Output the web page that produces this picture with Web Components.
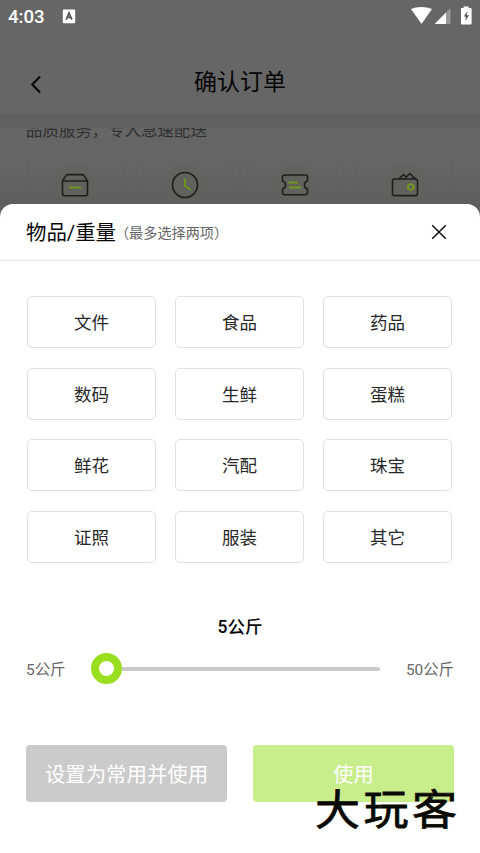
<!DOCTYPE html>
<html lang="zh-CN"><head><meta charset="utf-8"><title>确认订单</title>
<style>
html,body{margin:0;padding:0;background:#666}
body{font-family:Roboto,"Noto Sans CJK SC",sans-serif;width:480px;height:853px;overflow:hidden}
</style></head><body>
<order-page></order-page>
<script>
const define = (name, html) => customElements.define(name, class extends HTMLElement {
  constructor() {
    super();
    const t = document.createElement('template');
    t.innerHTML = html;
    this.attachShadow({mode: 'open'}).append(t.content.cloneNode(true));
  }
});

define('status-bar', `<style>
:host{display:flex;height:34px;align-items:center;padding:0 8px 0 8px;box-sizing:border-box;color:#fff}
.time{font-size:18.6px;font-weight:500;line-height:34px;width:54px;white-space:nowrap}
.sp{flex:1}svg{display:block}
</style>
<span class="time">4:03</span>
<svg width="14" height="16" viewBox="0 0 14 16"><rect x=".8" y=".6" width="12.4" height="13.6" rx="1" fill="#fff"/><path d="M4.1 10.6 7 3.8l2.9 6.8M5.2 8.400h3.600" fill="none" stroke="#555" stroke-width="1.700"/></svg>
<span class="sp"></span>
<svg width="61" height="22" viewBox="411 6 61 22"><path d="M411 9C416.800 6.200 426 6.200 432 9L421.500 24z" fill="#fff"/><path d="M435 24V23.500L446 12.500V24z" fill="#fff"/><path d="M446 12.500l4.500-4.500V24H446z" fill="#999"/><path d="M463.600 8v-1.500h5V8h2.200q.8 0 .8.8v15q0 .8-.8.8h-9q-.8 0-.8-.8v-15q0-.8.8-.8z" fill="#fff"/><path d="M467.700 11l-4 5.600h2.300l-.8 4.400 3.900-5.700h-2.400z" fill="#555"/></svg>`);

define('nav-header', `<style>
:host{display:grid;grid-template-columns:72px 1fr 72px;height:79px;align-items:center;color:#050505}
svg{display:block;margin:21px 0 0 28px}
.t{text-align:center;font-size:23px;line-height:34px;padding-top:18px}
</style><svg width="16" height="20" viewBox="0 0 16 20"><path d="M12 2.500 4.300 10.500 12 18.500" fill="none" stroke="#080808" stroke-width="2.100"/></svg><span class="t"><slot></slot></span>`);

const art = {
  box: '<path d="M9.500 18 13 12.600Q13.600 11.600 15 11.600H29Q30.400 11.600 31 12.600L34.500 18V30.500Q34.500 32.700 32.300 32.700H11.700Q9.500 32.700 9.500 30.500zH34.500"/><path class="g" d="M16 24.500H28"/>',
  clock: '<circle cx="22" cy="22" r="12.500"/><path class="g" d="M22 15.500V23L28 27"/>',
  ticket: '<path d="M11.500 12H32.500Q34.500 12 34.500 14V18Q31.500 18.500 31.500 22T34.500 26V29.500Q34.500 31.700 32.500 31.700H11.500Q9.500 31.700 9.500 29.500V26Q12.500 25.500 12.500 22T9.500 18V14Q9.500 12 11.500 12z"/><path class="g" d="M15.500 19.500H25M16 24.500H28"/>',
  wallet: '<rect x="9.500" y="16" width="25" height="16.600" rx="2"/><path d="M16 16 20.500 11.500 23.500 14.500M21.500 16 26.700 10.500 32.500 16"/><circle class="g" cx="27.800" cy="24" r="2.900"/>'
};
customElements.define('service-icon', class extends HTMLElement {
  constructor() {
    super();
    this.attachShadow({mode: 'open'}).innerHTML = `<style>
:host{display:flex;justify-content:center;height:60px;box-sizing:border-box;border:1px solid #606060;border-top-color:transparent;border-radius:6px;padding-top:3px}
svg{display:block;fill:none;stroke:#1e1e1e;stroke-width:1.600;stroke-linejoin:round}.g{stroke:#6f9a1c;stroke-width:1.800}
</style><svg width="44" height="44" viewBox="0 0 44 44"><circle cx="22" cy="22" r="21" fill="#60635a" fill-opacity=".6" stroke="none"/>${art[this.getAttribute('kind')]}</svg>`;
  }
});

define('page-backdrop', `<style>
:host{display:block;height:204px;overflow:hidden;background:#666}
.band{height:15px;background:#606060}
.clip{height:76px;overflow:hidden;background:linear-gradient(#666,#646464 60%,#5e5e5e)}
p{margin:-9px 0 0 26px;font-size:16.450px;line-height:24px;color:#303030;white-space:nowrap}
.row{display:grid;grid-template-columns:repeat(4,96px);gap:14px;padding:16px 0 0 27px}
</style>
<status-bar></status-bar><nav-header>确认订单</nav-header><div class="band"></div>
<div class="clip"><p>品质服务，专人急速配送</p><div class="row"><service-icon kind="box"></service-icon><service-icon kind="clock"></service-icon><service-icon kind="ticket"></service-icon><service-icon kind="wallet"></service-icon></div></div>`);

define('sheet-header', `<style>
:host{display:flex;align-items:center;height:57px;box-sizing:border-box;border-bottom:1px solid #e8e8e8;padding:0 32px 0 26px}
.t{font-size:20.400px;line-height:30px;color:#080808;white-space:nowrap;padding-top:2px}
.n{font-size:14.150px;color:#666;flex:1;white-space:nowrap;margin-left:-1px;letter-spacing:0}
svg{display:block}
</style><span class="t"><slot></slot></span><span class="n"><slot name="note"></slot></span>
<svg width="18" height="18" viewBox="0 0 18 18"><path d="M2.200 2.200 15.800 15.800M15.800 2.200 2.200 15.800" stroke="#111" stroke-width="1.500"/></svg>`);

define('choice-chip', `<style>
:host{display:flex;align-items:center;justify-content:center;box-sizing:border-box;height:52px;border:1px solid #e0e0e0;border-radius:5px;color:#282828;font-size:17.500px;line-height:26px;padding-top:2px}
</style><span><slot></slot></span>`);

define('weight-slider', `<style>
:host{display:block;color:#666;font-size:15.400px}
.v{text-align:center;color:#080808;font-size:17.500px;font-weight:500;line-height:26px}
.r{display:flex;align-items:center;height:32px;margin-top:13px;padding:0 26px;line-height:24px;white-space:nowrap}
.a,.z{padding-top:2px}
.a{width:65px}.track{display:flex;align-items:center;width:289px;height:32px}
i{display:block;box-sizing:border-box;width:31px;height:31px;border-radius:50%;border:8px solid #99df20;background:#fff}
b{display:block;flex:1;height:4px;border-radius:0 2px 2px 0;background:#c9c9c9}
.z{flex:1;text-align:right}
</style><div class="v">5公斤</div><div class="r"><span class="a">5公斤</span><div class="track"><i></i><b></b></div><span class="z">50公斤</span></div>`);

define('action-button', `<style>
:host{display:flex;align-items:center;justify-content:center;height:57px;border-radius:4px;background:var(--fill);color:#fff;font-size:20.400px;line-height:30px;padding-top:3px;box-sizing:border-box}
</style><span><slot></slot></span>`);

define('site-mark', `<style>
:host{position:absolute;left:315px;top:778px;font:400 45px/58px "Noto Sans CJK SC",sans-serif;letter-spacing:3.500px;color:#0a0a05;white-space:nowrap;text-shadow:0 0 2px #e8e4b0;-webkit-text-stroke:.8px #0a0a05;transform:scaleY(.94)}
</style><slot></slot>`);

define('item-sheet', `<style>
:host{display:block;height:649px;background:#fff;border-radius:13px 13px 0 0}
.grid{display:grid;grid-template-columns:repeat(3,129px);column-gap:19px;row-gap:19.700px;padding:35px 0 0 27px}
weight-slider{margin-top:50.500px}
.act{display:grid;grid-template-columns:201px 201px;gap:26px;padding:60px 0 0 26px}
</style>
<sheet-header>物品/重量<span slot="note">（最多选择两项）</span></sheet-header>
<div class="grid">${['文件','食品','药品','数码','生鲜','蛋糕','鲜花','汽配','珠宝','证照','服装','其它'].map(x => `<choice-chip>${x}</choice-chip>`).join('')}</div>
<weight-slider></weight-slider>
<div class="act"><action-button style="--fill:#cbcbcb">设置为常用并使用</action-button><action-button style="--fill:#c8ed8b">使用</action-button></div>`);

define('order-page', `<style>:host{display:block;width:480px;height:853px;background:#5e5e5e;overflow:hidden}</style>
<page-backdrop></page-backdrop><item-sheet></item-sheet><site-mark>大玩客</site-mark>`);
</script></body></html>
